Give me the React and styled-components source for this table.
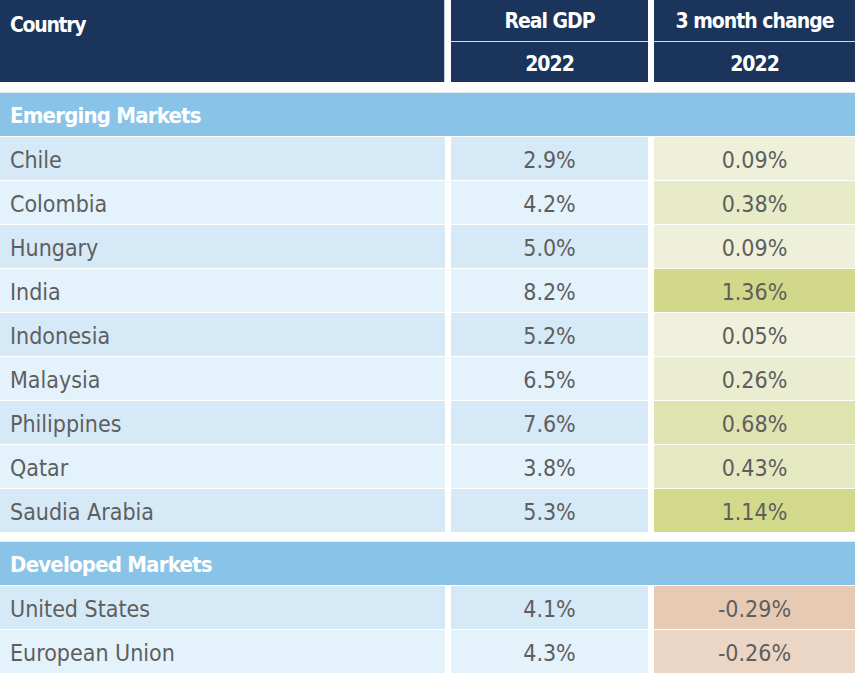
import { Fragment } from "react";
import styled, { createGlobalStyle } from "styled-components";

const GlobalStyle = createGlobalStyle`
  html, body {
    margin: 0;
    padding: 0;
    background: #fff;
  }
  body {
    font-family: "DejaVu Sans Condensed", "Liberation Sans", sans-serif;
  }
`;

// name, real gdp, 3 month change, heat colour
const emerging = [
  ["Chile", "2.9%", "0.09%", "#eff0d9"],
  ["Colombia", "4.2%", "0.38%", "#e7ebc8"],
  ["Hungary", "5.0%", "0.09%", "#eff0d9"],
  ["India", "8.2%", "1.36%", "#d2d88a"],
  ["Indonesia", "5.2%", "0.05%", "#f0f1dc"],
  ["Malaysia", "6.5%", "0.26%", "#eaedd0"],
  ["Philippines", "7.6%", "0.68%", "#dfe3b0"],
  ["Qatar", "3.8%", "0.43%", "#e5e9c2"],
  ["Saudia Arabia", "5.3%", "1.14%", "#d3d98b"],
];

const developed = [
  ["United States", "4.1%", "-0.29%", "#e6cab4"],
  ["European Union", "4.3%", "-0.26%", "#ebd6c5"],
];

const Table = styled.div`
  width: 855px;
  display: grid;
  grid-template-columns: 445px 197px 201px;
  column-gap: 6px;
  background: #fff;
`;

const HeadCountry = styled.div`
  grid-row: span 2;
  background: #1a345c;
  color: #fff;
  font-weight: bold;
  font-size: 21px;
  letter-spacing: -1.3px;
  padding: 13px 10px 0;
  height: 82px;
  box-sizing: border-box;
  border-right: 1px solid #c9d0da;
`;

const HeadCol = styled.div`
  grid-row: span 2;
  display: grid;
  grid-template-rows: 41px 40px;
  row-gap: 1px;
  background: #d5dbe3;
  height: 82px;
`;

const HeadCell = styled.div`
  background: #1a345c;
  color: #fff;
  font-weight: bold;
  font-size: 21px;
  letter-spacing: -1px;
  display: flex;
  align-items: center;
  justify-content: center;
  padding-top: ${(p) => (p.$top ? "1px" : "3px")};
`;

const Section = styled.div`
  grid-column: 1 / -1;
  background: #89c4e8;
  color: #fff;
  font-weight: bold;
  font-size: 22px;
  letter-spacing: -0.8px;
  height: 44px;
  display: flex;
  align-items: center;
  padding-left: 10px;
  padding-top: 2px;
  box-sizing: border-box;
  margin-top: ${(p) => p.$gap}px;
  border-top: 1px solid #e3ebf1;
  margin-bottom: 1px;
`;

const Cell = styled.div`
  height: 43px;
  box-sizing: border-box;
  padding-top: 2px;
  margin-bottom: 1px;
  background: ${(p) => p.$bg};
  color: #5e5e5e;
  font-size: 23px;
  display: flex;
  align-items: center;
  justify-content: ${(p) => (p.$left ? "flex-start" : "center")};
  padding-left: ${(p) => (p.$left ? "10px" : "0")};
`;

const rowShade = (i) => (i % 2 === 0 ? "#d6e9f7" : "#e4f2fb");

const Rows = ({ data }) =>
  data.map(([name, gdp, chg, heat], i) => (
    <Fragment key={name}>
      <Cell $left $bg={rowShade(i)}>{name}</Cell>
      <Cell $bg={rowShade(i)}>{gdp}</Cell>
      <Cell $bg={heat}>{chg}</Cell>
    </Fragment>
  ));

export default function App() {
  return (
    <>
      <GlobalStyle />
      <Table>
        <HeadCountry>Country</HeadCountry>
        <HeadCol>
          <HeadCell $top>Real GDP</HeadCell>
          <HeadCell>2022</HeadCell>
        </HeadCol>
        <HeadCol>
          <HeadCell $top>3 month change</HeadCell>
          <HeadCell>2022</HeadCell>
        </HeadCol>
        <Section $gap={10}>Emerging Markets</Section>
        <Rows data={emerging} />
        <Section $gap={8}>Developed Markets</Section>
        <Rows data={developed} />
      </Table>
    </>
  );
}
